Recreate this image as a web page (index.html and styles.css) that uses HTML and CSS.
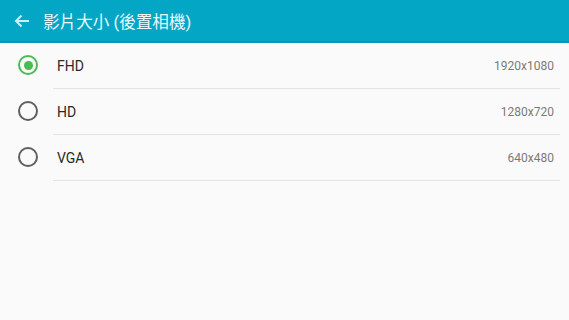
FILE: index.html
```html
<!DOCTYPE html>
<html lang="zh-Hant">
<head>
<meta charset="utf-8">
<link rel="stylesheet" href="styles.css">
</head>
<body>
<header class="appbar">
  <svg class="back" width="16" height="14" viewBox="0 0 16 14"><path d="M15 7H2M7.5 1.5L2 7l5.5 5.5" fill="none" stroke="#c8f1fa" stroke-width="2"/></svg>
  <h1 class="title">影片大小 (後置相機)</h1>
</header>
<ul class="list">
  <li class="row">
    <span class="radio on"></span>
    <div class="content"><span class="label">FHD</span><span class="value">1920x1080</span></div>
  </li>
  <li class="row">
    <span class="radio"></span>
    <div class="content"><span class="label">HD</span><span class="value">1280x720</span></div>
  </li>
  <li class="row">
    <span class="radio"></span>
    <div class="content"><span class="label">VGA</span><span class="value">640x480</span></div>
  </li>
</ul>
</body>
</html>
```
FILE: styles.css
```css
html, body { margin: 0; padding: 0; }
body {
  background: #fafafa;
  font-family: Roboto, "Noto Sans CJK TC", sans-serif;
  width: 569px;
  height: 320px;
  overflow: hidden;
}
.appbar {
  height: 41px;
  background: #04a6c6;
  border-bottom: 2px solid #0797b5;
  display: flex;
  align-items: center;
  padding-left: 14px;
}
.back { display: block; margin-right: 13px; }
.title {
  margin: 0;
  font-size: 16.6px;
  font-weight: 400;
  color: #eafaff;
  letter-spacing: 0;
}
.list { list-style: none; margin: 0; padding: 0; }
.row {
  display: flex;
  align-items: stretch;
  height: 46px;
}
.radio {
  flex: none;
  width: 16px;
  height: 16px;
  border: 2px solid #5f5f5f;
  border-radius: 50%;
  margin: 12px 18px 0 18px;
  box-sizing: content-box;
  display: flex;
  align-items: center;
  justify-content: center;
}
.radio.on { border-color: #4cbb53; }
.radio.on::after {
  content: "";
  width: 9px;
  height: 9px;
  border-radius: 50%;
  background: #4cbb53;
}
.content {
  flex: 1;
  display: flex;
  align-items: center;
  justify-content: space-between;
  border-bottom: 1px solid #e3e3e3;
  margin-right: 9px;
  padding-right: 6px;
  margin-left: -3px;
}
.label { font-size: 14px; color: #2a2a2a; padding-left: 4px; }
.value { font-size: 12px; color: #7a7a7a; }
```
